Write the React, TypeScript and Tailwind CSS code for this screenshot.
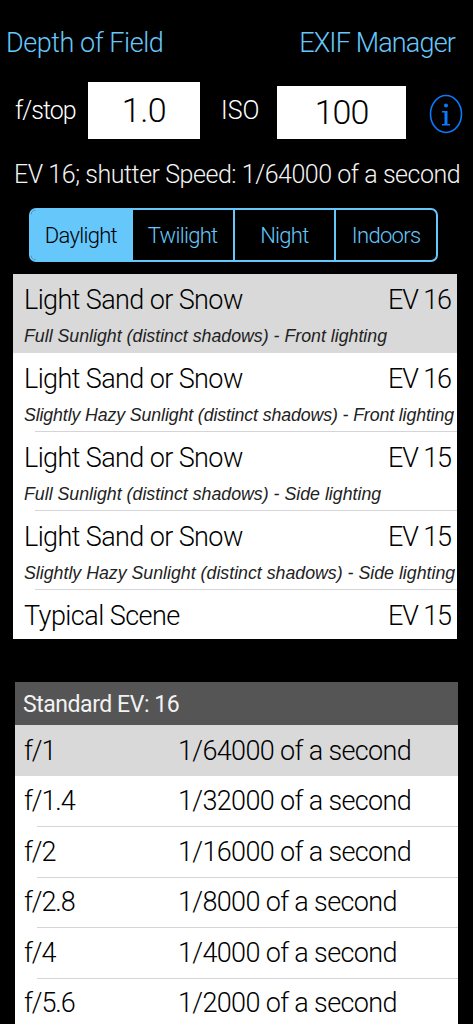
const scenes = [
  { title: 'Light Sand or Snow', ev: 'EV 16', note: 'Full Sunlight (distinct shadows) - Front lighting', fit: '' },
  { title: 'Light Sand or Snow', ev: 'EV 16', note: 'Slightly Hazy Sunlight (distinct shadows) - Front lighting', fit: 'tracking-[-0.12px]' },
  { title: 'Light Sand or Snow', ev: 'EV 15', note: 'Full Sunlight (distinct shadows) - Side lighting', fit: '' },
  { title: 'Light Sand or Snow', ev: 'EV 15', note: 'Slightly Hazy Sunlight (distinct shadows) - Side lighting', fit: '' },
];

const stops = [
  ['f/1', '1/64000 of a second'],
  ['f/1.4', '1/32000 of a second'],
  ['f/2', '1/16000 of a second'],
  ['f/2.8', '1/8000 of a second'],
  ['f/4', '1/4000 of a second'],
  ['f/5.6', '1/2000 of a second'],
];

const tabs = ['Daylight', 'Twilight', 'Night', 'Indoors'];

export default function App() {
  return (
    <div className="h-[1024px] w-[473px] overflow-hidden bg-black font-['Roboto',sans-serif] font-[350] text-white">
      <div className="flex items-center justify-between pl-[6px] pr-[18px] pt-[25px] text-[27px] leading-[36px] text-[#66c7fb]">
        <span className="tracking-[-0.45px]">Depth of Field</span>
        <span className="tracking-[-0.85px]">EXIF Manager</span>
      </div>

      <div className="mt-[21px] flex h-[57px] items-center pl-[15px]">
        <span className="w-[73px] text-[25px] tracking-[-1px]">f/stop</span>
        <div className="flex h-[57px] w-[112px] items-center justify-center bg-white text-[34px] tracking-[-0.5px] text-black">1.0</div>
        <span className="ml-[21px] w-[56px] text-[25px]">ISO</span>
        <div className="mt-[4px] flex h-[53px] w-[129px] items-center justify-center bg-white text-[34px] tracking-[-1px] text-black">100</div>
        <svg className="ml-[23px] mt-[6px]" width="34" height="40" viewBox="0 0 34 40" fill="none">
          <ellipse cx="17" cy="20" rx="15.5" ry="18.5" stroke="#0a7aff" strokeWidth="1.6" />
          <circle cx="17" cy="11.5" r="2" fill="#0a7aff" />
          <path d="M13 17h5.5v13H21v1.6h-8V30h2.5V18.6H13z" fill="#0a7aff" />
        </svg>
      </div>

      <div className="mt-[19px] whitespace-nowrap pl-[14px] text-[25px] leading-[34px] tracking-[-0.46px] text-[#f4f4f4]">EV 16; shutter Speed: 1/64000 of a second</div>

      <div className="ml-[29px] mt-[16px] flex h-[54px] w-[409px] overflow-hidden rounded-[7px] border-2 border-[#66c7fb]">
        {tabs.map((tab, i) => (
          <div
            key={tab}
            className={
              i === 0
                ? 'flex flex-1 items-center justify-center bg-[#66c7fb] text-[22px] tracking-[-0.7px] text-black'
                : 'flex flex-1 items-center justify-center border-l-2 border-[#66c7fb] text-[22px] tracking-[-0.7px] text-[#66c7fb]'
            }
          >
            {tab}
          </div>
        ))}
      </div>

      <div className="ml-[13px] mt-[12px] w-[444px] bg-white text-black">
        {scenes.map((s, i) => (
          <div key={i} className={i === 0 ? 'h-[79px] bg-[#d9d9d9] pl-[11px] pr-[1px]' : 'relative h-[79px] pl-[11px] pr-[1px]'}>
            <div className="flex items-center justify-between pr-[5px] pt-[8px] text-[27px] leading-[36px] tracking-[-0.6px]">
              <span>{s.title}</span>
              <span className="tracking-[-1.1px]">{s.ev}</span>
            </div>
            <div className={`mt-[6px] whitespace-nowrap font-['Liberation_Sans',sans-serif] text-[17.75px] font-normal italic leading-[24px] text-[#222222] ${s.fit}`}>{s.note}</div>
            {i > 0 && <div className="absolute bottom-0 left-[22px] right-0 h-[1px] bg-[#d5d5d8]" />}
          </div>
        ))}
        <div className="flex h-[49px] items-center justify-between pl-[11px] pr-[6px] pt-[3px] text-[27px] tracking-[-0.55px]">
          <span>Typical Scene</span>
          <span className="tracking-[-1.1px]">EV 15</span>
        </div>
      </div>

      <div className="ml-[15px] mt-[43px] w-[443px]">
        <div className="flex h-[43px] items-center bg-[#555555] pl-[8px] pt-[3px] text-[23px] font-[450] tracking-[-0.45px] text-[#f2f2f2]">Standard EV: 16</div>
        {stops.map(([stop, speed], i) => (
          <div
            key={stop}
            className={
              i === 0
                ? 'flex h-[51px] items-center bg-[#d9d9d9] pl-[9px] pt-[1px] text-[27px] text-black'
                : 'relative flex h-[50.4px] items-center bg-white pl-[9px] pt-[1px] text-[27px] text-black'
            }
          >
            {i > 1 && <div className="absolute left-[22px] right-0 top-0 h-[1px] bg-[#d5d5d8]" />}
            <span className="w-[154px] tracking-[-1.1px]">{stop}</span>
            <span className="tracking-[-0.65px]">{speed}</span>
          </div>
        ))}
      </div>
    </div>
  );
}
